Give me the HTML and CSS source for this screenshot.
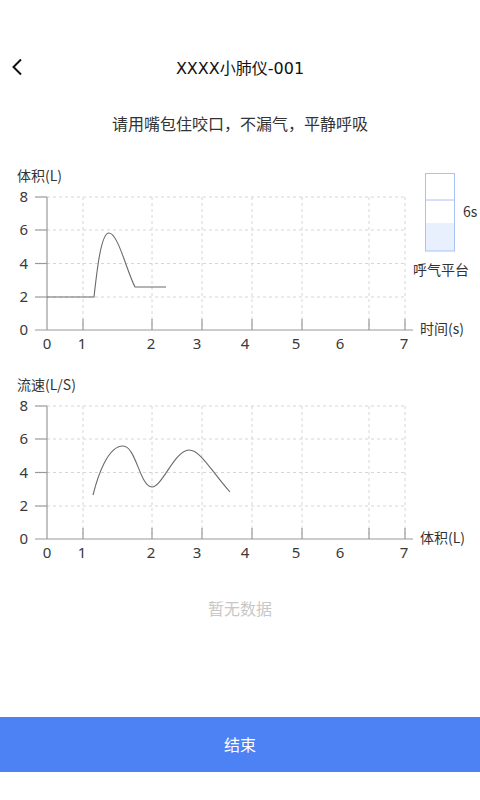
FILE: index.html
```html
<!DOCTYPE html>
<html lang="zh-CN">
<head>
  <meta charset="UTF-8">
  <meta name="viewport" content="width=device-width, initial-scale=1.0">
  <title>XXXX小肺仪-001</title>
  <link rel="stylesheet" href="styles.css">
</head>
<body>
  <div class="page">
    <!-- 顶部导航 -->
    <div class="nav">
      <div class="nav-back">
        <svg width="12" height="18" viewBox="0 0 12 18">
          <path d="M10 1.5 L2.5 9 L10 16.5" fill="none" stroke="#111" stroke-width="2"/>
        </svg>
      </div>
      <div class="nav-title">XXXX小肺仪-001</div>
      <div></div>
    </div>

    <div class="tip">请用嘴包住咬口，不漏气，平静呼吸</div>

    <!-- 容积-时间曲线 -->
    <svg class="chart" width="480" height="200" viewBox="0 0 480 200">
      <text class="axis-name" x="17" y="21">体积(L)</text>

      <g class="grid">
        <line x1="47" y1="37" x2="405" y2="37"/>
        <line x1="47" y1="70" x2="405" y2="70"/>
        <line x1="47" y1="103.5" x2="405" y2="103.5"/>
        <line x1="47" y1="137" x2="405" y2="137"/>
        <line x1="83" y1="37" x2="83" y2="170"/>
        <line x1="152" y1="37" x2="152" y2="170"/>
        <line x1="202" y1="37" x2="202" y2="170"/>
        <line x1="252" y1="37" x2="252" y2="170"/>
        <line x1="302" y1="37" x2="302" y2="170"/>
        <line x1="369" y1="37" x2="369" y2="170"/>
        <line x1="405" y1="37" x2="405" y2="170"/>
      </g>

      <g class="axis">
        <line x1="47" y1="37" x2="47" y2="170"/>
        <line x1="35" y1="37" x2="47" y2="37"/>
        <line x1="35" y1="70" x2="47" y2="70"/>
        <line x1="35" y1="103.5" x2="47" y2="103.5"/>
        <line x1="35" y1="137" x2="47" y2="137"/>
        <line x1="35" y1="170" x2="413" y2="170"/>
        <line x1="83" y1="159" x2="83" y2="170"/>
        <line x1="152" y1="159" x2="152" y2="170"/>
        <line x1="202" y1="159" x2="202" y2="170"/>
        <line x1="252" y1="159" x2="252" y2="170"/>
        <line x1="302" y1="159" x2="302" y2="170"/>
        <line x1="369" y1="159" x2="369" y2="170"/>
        <line x1="405" y1="159" x2="405" y2="170"/>
      </g>

      <g class="y-labels">
        <text x="28" y="42">8</text>
        <text x="28" y="75">6</text>
        <text x="28" y="108.5">4</text>
        <text x="28" y="142">2</text>
        <text x="28" y="175">0</text>
      </g>
      <g class="x-labels">
        <text x="47" y="189">0</text>
        <text x="82" y="189">1</text>
        <text x="151" y="189">2</text>
        <text x="197" y="189">3</text>
        <text x="245" y="189">4</text>
        <text x="296" y="189">5</text>
        <text x="340" y="189">6</text>
        <text x="404" y="189">7</text>
      </g>
      <text class="axis-name" x="420" y="174">时间(s)</text>

      <path class="curve" d="M47 137 H94 C97 110, 101 73, 109 73 C118 73, 127 112, 135 127 H166"/>

      <!-- 呼气平台 -->
      <rect class="plat-fill" x="425.5" y="63" width="29" height="28"/>
      <rect class="plat-box" x="425.5" y="13.5" width="29" height="77.5"/>
      <line class="plat-box" x1="425.5" y1="40" x2="454.5" y2="40"/>
      <text class="axis-name" x="463" y="57">6s</text>
      <text class="axis-name" x="413" y="115">呼气平台</text>
    </svg>

    <!-- 流速-容积曲线 -->
    <svg class="chart chart-flow" width="480" height="200" viewBox="0 0 480 200">
      <text class="axis-name" x="17" y="21">流速(L/S)</text>

      <g class="grid">
        <line x1="47" y1="37" x2="405" y2="37"/>
        <line x1="47" y1="70" x2="405" y2="70"/>
        <line x1="47" y1="103.5" x2="405" y2="103.5"/>
        <line x1="47" y1="137" x2="405" y2="137"/>
        <line x1="83" y1="37" x2="83" y2="170"/>
        <line x1="152" y1="37" x2="152" y2="170"/>
        <line x1="202" y1="37" x2="202" y2="170"/>
        <line x1="252" y1="37" x2="252" y2="170"/>
        <line x1="302" y1="37" x2="302" y2="170"/>
        <line x1="369" y1="37" x2="369" y2="170"/>
        <line x1="405" y1="37" x2="405" y2="170"/>
      </g>

      <g class="axis">
        <line x1="47" y1="37" x2="47" y2="170"/>
        <line x1="35" y1="37" x2="47" y2="37"/>
        <line x1="35" y1="70" x2="47" y2="70"/>
        <line x1="35" y1="103.5" x2="47" y2="103.5"/>
        <line x1="35" y1="137" x2="47" y2="137"/>
        <line x1="35" y1="170" x2="413" y2="170"/>
        <line x1="83" y1="159" x2="83" y2="170"/>
        <line x1="152" y1="159" x2="152" y2="170"/>
        <line x1="202" y1="159" x2="202" y2="170"/>
        <line x1="252" y1="159" x2="252" y2="170"/>
        <line x1="302" y1="159" x2="302" y2="170"/>
        <line x1="369" y1="159" x2="369" y2="170"/>
        <line x1="405" y1="159" x2="405" y2="170"/>
      </g>

      <g class="y-labels">
        <text x="28" y="42">8</text>
        <text x="28" y="75">6</text>
        <text x="28" y="108.5">4</text>
        <text x="28" y="142">2</text>
        <text x="28" y="175">0</text>
      </g>
      <g class="x-labels">
        <text x="47" y="189">0</text>
        <text x="82" y="189">1</text>
        <text x="151" y="189">2</text>
        <text x="197" y="189">3</text>
        <text x="245" y="189">4</text>
        <text x="296" y="189">5</text>
        <text x="340" y="189">6</text>
        <text x="404" y="189">7</text>
      </g>
      <text class="axis-name" x="420" y="174">体积(L)</text>

      <path class="curve" d="M93 126 C98 106, 108 77, 123 77 C136 77, 140 118, 152 118 C162 118, 175 81, 189 81 C200 81, 210 100, 230 123"/>
    </svg>

    <div class="empty">暂无数据</div>

    <div class="btn-end">结束</div>
  </div>
</body>
</html>
```

FILE: styles.css
```css
/* 全局 */
* {
  box-sizing: border-box;
}

body {
  margin: 0;
  padding: 0;
  background: #fff;
  font-family: "Noto Sans CJK SC", "Noto Sans", sans-serif;
  color: #222;
}

.page {
  width: 480px;
  height: 800px;
  display: flex;
  flex-direction: column;
}

/* 导航栏 */
.nav {
  margin-top: 40px;
  height: 54px;
  display: grid;
  grid-template-columns: 60px 1fr 60px;
  align-items: center;
}

.nav-back {
  padding-left: 11px;
  display: flex;
  align-items: center;
}

.nav-title {
  text-align: center;
  font-family: "DejaVu Sans", "Noto Sans CJK SC", sans-serif;
  font-size: 16px;
  color: #111;
}

.tip {
  margin-top: 17px;
  line-height: 24px;
  text-align: center;
  font-size: 16px;
  color: #333;
}

/* 图表 */
.chart {
  display: block;
  margin-top: 25px;
}

.chart-flow {
  margin-top: 9px;
}

.chart text {
  font-family: "Noto Sans CJK SC", "Noto Sans", sans-serif;
  font-size: 14px;
  fill: #333;
}

.chart .y-labels text,
.chart .x-labels text {
  font-family: "Noto Sans", sans-serif;
  font-size: 15px;
  fill: #3a3a3a;
}

.chart .y-labels text {
  text-anchor: end;
}

.chart .x-labels text {
  text-anchor: middle;
}

.grid line {
  stroke: #d6d6d6;
  stroke-width: 1;
  stroke-dasharray: 3 3;
}

.axis line {
  stroke: #999;
  stroke-width: 1.2;
}

.curve {
  fill: none;
  stroke: #6a6a6a;
  stroke-width: 1.1;
}

.plat-box {
  fill: none;
  stroke: #a9c2f6;
  stroke-width: 1;
}

.plat-fill {
  fill: #e8effd;
}

.empty {
  margin-top: 27px;
  line-height: 24px;
  text-align: center;
  font-size: 16px;
  color: #c8c8c8;
}

/* 底部按钮 */
.btn-end {
  margin-top: auto;
  margin-bottom: 28px;
  height: 55px;
  line-height: 55px;
  text-align: center;
  background-color: #4d82f5;
  color: #fff;
  font-size: 16px;
}
```
